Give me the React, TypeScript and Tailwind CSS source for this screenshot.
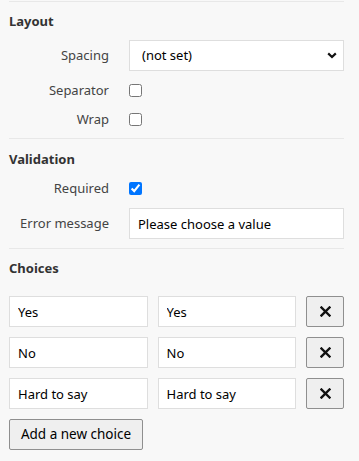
import React from 'react'

const choices = ['Yes', 'No', 'Hard to say']

function XIcon() {
  return (
    <svg width="11" height="11" viewBox="0 0 11 11" fill="none">
      <path d="M1.5 1.5 L9.5 9.5 M9.5 1.5 L1.5 9.5" stroke="#111" strokeWidth="2.4" strokeLinecap="square" />
    </svg>
  )
}

function Chevron() {
  return (
    <svg width="10" height="7" viewBox="0 0 10 7" fill="none">
      <path d="M1.2 1.4 L5 5 L8.8 1.4" stroke="#111" strokeWidth="2.2" />
    </svg>
  )
}

export default function App() {
  return (
    <div className="min-h-screen bg-[#f8f8f8] pl-[9px] pr-[15px] pt-px text-[13px] text-[#222] font-['Noto_Sans','Open_Sans',sans-serif]">
      {/* Layout */}
      <section className="border-t border-[#e8e8e8] pt-[9px] pb-[9px]">
        <h2 className="font-bold text-[#333] leading-5">Layout</h2>
        <div className="mt-[9px] grid grid-cols-[100px_1fr] gap-x-5 gap-y-[9px] items-center">
          <label className="text-right text-[#444]">Spacing</label>
          <div className="relative">
            <select className="w-full h-[31px] appearance-none bg-white border border-[#dedede] pl-3 pr-8 text-black outline-none">
              <option>(not set)</option>
            </select>
            <span className="pointer-events-none absolute right-[7px] top-[12px]">
              <Chevron />
            </span>
          </div>
          <label className="text-right text-[#444] leading-5">Separator</label>
          <div className="h-5 flex items-center">
            <input type="checkbox" className="m-0 w-[13px] h-[13px]" />
          </div>
          <label className="text-right text-[#444] leading-5">Wrap</label>
          <div className="h-5 flex items-center">
            <input type="checkbox" className="m-0 w-[13px] h-[13px]" />
          </div>
        </div>
      </section>

      {/* Validation */}
      <section className="border-t border-[#e8e8e8] pt-[10px] pb-[9px]">
        <h2 className="font-bold text-[#333] leading-5">Validation</h2>
        <div className="mt-[9px] grid grid-cols-[100px_1fr] gap-x-5 gap-y-[10px] items-center">
          <label className="text-right text-[#444] leading-5">Required</label>
          <div className="h-5 flex items-center">
            <input type="checkbox" defaultChecked className="m-0 w-[13px] h-[13px]" />
          </div>
          <label className="text-right text-[#444]">Error message</label>
          <input
            type="text"
            defaultValue="Please choose a value"
            className="h-[31px] w-full bg-white border border-[#dedede] px-2 text-black outline-none"
          />
        </div>
      </section>

      {/* Choices */}
      <section className="border-t border-[#e8e8e8] pt-[9px]">
        <h2 className="font-bold text-[#333] leading-5">Choices</h2>
        <div className="mt-[18px] flex flex-col gap-[10px]">
          {choices.map((c) => (
            <div key={c} className="grid grid-cols-[1fr_1fr_38px] gap-[10px]">
              <input
                type="text"
                defaultValue={c}
                className="h-[31px] min-w-0 bg-white border border-[#dedede] px-2 text-black outline-none"
              />
              <input
                type="text"
                defaultValue={c}
                className="h-[31px] min-w-0 bg-white border border-[#dedede] px-2 text-black outline-none"
              />
              <button className="h-[31px] flex items-center justify-center bg-[#efefef] border border-[#8f8f8f] rounded-[2px]">
                <XIcon />
              </button>
            </div>
          ))}
          <div>
            <button className="h-[31px] w-[134px] bg-[#efefef] border border-[#8f8f8f] rounded-[2px] text-[13.5px] text-black">
              Add a new choice
            </button>
          </div>
        </div>
      </section>
    </div>
  )
}
